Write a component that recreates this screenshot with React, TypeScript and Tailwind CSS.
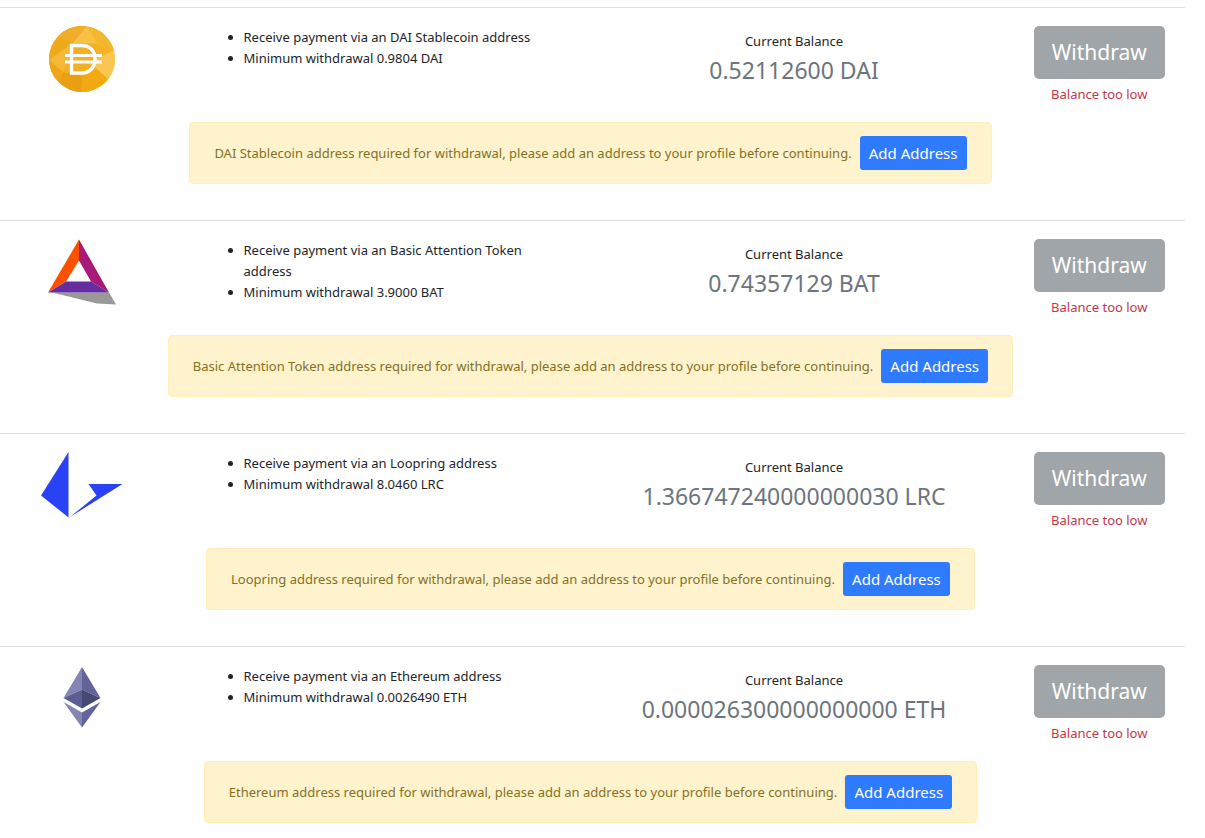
const DaiLogo = (): JSX.Element => {
  return (
    <svg className="w-[66px] h-[66px]" viewBox="0 0 66 66" role="img" aria-label="DAI">
      <clipPath id="dai-circle">
        <circle cx="33" cy="33" r="33" />
      </clipPath>
      <g clipPath="url(#dai-circle)">
        <path d="M0 0h66v66H0z" fill="#f5b224" />
        <path d="M0 34L24 17L38 0H0z" fill="#efaa1c" />
        <path d="M8 10L24 17L38 0H14z" fill="#efad28" />
        <path d="M24 17L38 0L66 10V24L48 18z" fill="#f7c145" />
        <path d="M38 0L48 18L66 24V0z" fill="#f4b62c" />
        <path d="M0 34L24 17L14 46z" fill="#f5b93a" />
        <path d="M0 34L14 46L8 60L0 60z" fill="#efa517" />
        <path d="M14 46L34 50L32 66H6z" fill="#e89f12" />
        <path d="M34 50L52 40L62 54L46 66H32z" fill="#f2a912" />
        <path d="M40 36L66 24V50L60 54z" fill="#f8c650" />
        <path d="M24 17L48 18L44 34L34 50L14 46z" fill="#f4b025" />
      </g>
      <path
        d="M22.500 19.500h10C41 19.500 46 25 46 33s-5 14-13.500 14h-10z"
        fill="none"
        stroke="#fff"
        strokeWidth="3.400"
      />
      <path d="M16 29.500h37M16 36h37" stroke="#fff" strokeWidth="3" />
    </svg>
  );
};

const BatLogo = (): JSX.Element => {
  return (
    <svg className="w-[68px] h-[66px]" viewBox="0 0 68 66" role="img" aria-label="BAT">
      <path d="M4 53.500H61L68 65.500L49 64.500z" fill="#999" />
      <path d="M31 0.500L0 53.500L18 42.500L31 21.500z" fill="#ff5000" />
      <path d="M31 0.500L61 53.500L43 42.500L31 21.500z" fill="#a8197a" />
      <path d="M0 53.500L18 42.500H43L61 53.500z" fill="#662da0" />
    </svg>
  );
};

const LoopringLogo = (): JSX.Element => {
  return (
    <svg className="w-[82px] h-[66px]" viewBox="0 0 82 66" role="img" aria-label="LRC">
      <path d="M27.500 0V65.500L0 43.500z" fill="#2a42f5" />
      <path d="M47.500 32H81.500L29 65L55.500 43.500z" fill="#2a42f5" />
    </svg>
  );
};

const EthLogo = (): JSX.Element => {
  return (
    <svg className="w-[38px] h-[66px]" viewBox="0 0 38 66" role="img" aria-label="ETH">
      <path d="M19 2L0.500 33L19 24.500z" fill="#8485b3" />
      <path d="M19 2L37.500 33L19 24.500z" fill="#626499" />
      <path d="M0.500 33L19 24.500V43.500z" fill="#5b5d93" />
      <path d="M37.500 33L19 24.500V43.500z" fill="#454a75" />
      <path d="M0.500 37L19 47.500V62.500z" fill="#8485b3" />
      <path d="M37.500 37L19 47.500V62.500z" fill="#62649b" />
    </svg>
  );
};

type Coin = {
  name: string;
  symbol: string;
  minimum: string;
  balance: string;
  logo: JSX.Element;
};

const coins: Array<Coin> = [
  {
    name: "DAI Stablecoin",
    symbol: "DAI",
    minimum: "0.9804",
    balance: "0.52112600",
    logo: <DaiLogo />,
  },
  {
    name: "Basic Attention Token",
    symbol: "BAT",
    minimum: "3.9000",
    balance: "0.74357129",
    logo: <BatLogo />,
  },
  {
    name: "Loopring",
    symbol: "LRC",
    minimum: "8.0460",
    balance: "1.366747240000000030",
    logo: <LoopringLogo />,
  },
  {
    name: "Ethereum",
    symbol: "ETH",
    minimum: "0.0026490",
    balance: "0.000026300000000000",
    logo: <EthLogo />,
  },
];

const CoinRow = ({ name, symbol, minimum, balance, logo }: Coin): JSX.Element => {
  return (
    <section className="border-t border-[#dfe0e1] pt-[18px] pb-9">
      <div className="grid grid-cols-12 -ml-5 -mr-4">
        <div className="col-span-2 flex justify-center items-start">{logo}</div>
        <div className="col-span-4 px-5 pt-px">
          <ul className="list-disc pl-10">
            <li>Receive payment via an {name} address</li>
            <li>
              Minimum withdrawal {minimum} {symbol}
            </li>
          </ul>
        </div>
        <div className="col-span-4 pt-[5px] text-center">
          <div>Current Balance</div>
          <div className="text-[23px] leading-9 text-[#6c757d]">
            {balance} {symbol}
          </div>
        </div>
        <div className="col-span-2 text-center">
          <button
            disabled
            className="block mx-auto w-[131px] h-[53px] rounded-[5px] bg-[#a0a5a9] text-white text-[21px]"
          >
            Withdraw
          </button>
          <p className="pt-[5px] text-[#c4384a]">Balance too low</p>
        </div>
      </div>
      <div className="flex justify-center mt-[17px] -ml-5 -mr-4">
        <div className="flex items-center gap-2 h-[62px] px-6 rounded border border-[#ffeeba] bg-[#fff3cd] text-[#85701f]">
          <span>
            {name} address required for withdrawal, please add an address to your
            profile before continuing.
          </span>
          <button className="w-[107px] h-[34px] rounded-[3px] bg-[#2f7bff] text-white text-[15px]">
            Add Address
          </button>
        </div>
      </div>
    </section>
  );
};

const App = (): JSX.Element => {
  return (
    <main className="mr-5 pt-[7px] bg-white font-['Noto_Sans',sans-serif] text-[13px] leading-[21px] text-[#212529]">
      {coins.map((coin) => {
        return <CoinRow key={coin.symbol} {...coin} />;
      })}
    </main>
  );
};

export default App;
